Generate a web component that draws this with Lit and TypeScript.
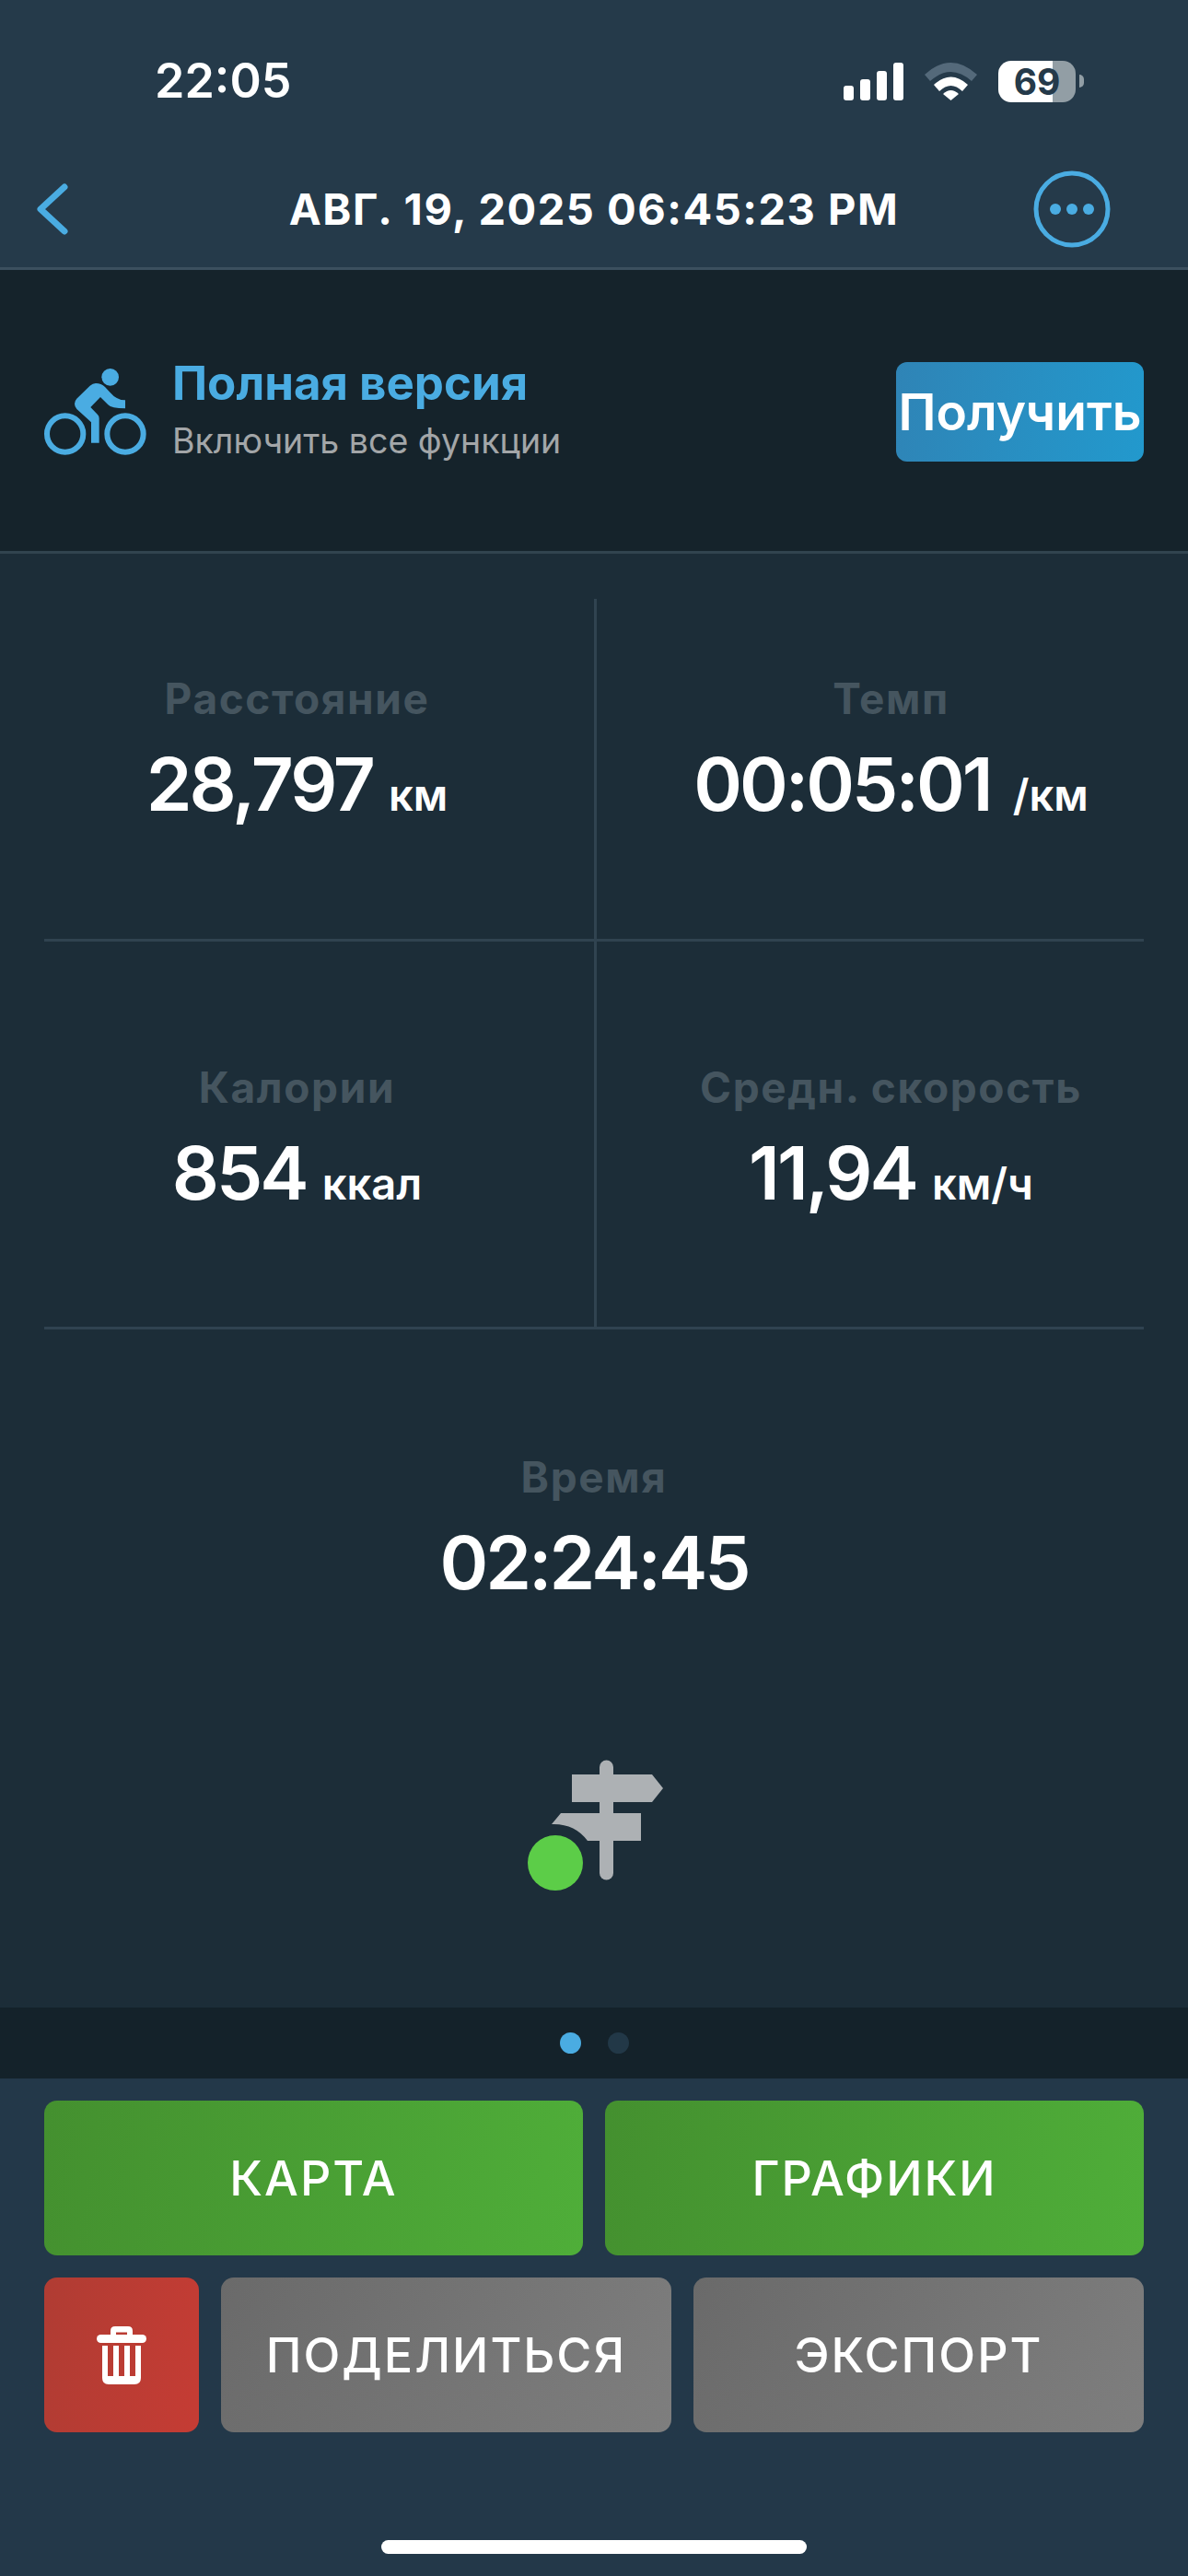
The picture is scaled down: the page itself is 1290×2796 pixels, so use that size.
import { LitElement, html, css, svg } from 'lit';
import { customElement } from 'lit/decorators.js';

@customElement('app-root')
export class AppRoot extends LitElement {
  static styles = css`
    :host {
      display: block;
      width: 1290px;
      height: 2796px;
      overflow: hidden;
      font-family: Inter, 'Liberation Sans', sans-serif;
      color: #fff;
      background: #233849;
    }
    .page {
      display: flex;
      flex-direction: column;
      height: 100%;
    }
    .top {
      height: 290px;
      background: #253a4a;
      border-bottom: 3px solid #3b4f5e;
      display: flex;
      flex-direction: column;
    }
    .status {
      height: 150px;
      display: flex;
      align-items: center;
      padding-left: 168px;
      padding-right: 113px;
      padding-top: 26px;
      box-sizing: border-box;
    }
    .clock {
      font-size: 52px;
      font-weight: 600;
      line-height: 60px;
      flex: 1;
    }
    .status-icons {
      display: flex;
      align-items: center;
      gap: 23px;
    }
    .battery {
      display: flex;
      align-items: center;
      gap: 4px;
    }
    .battery-body {
      width: 84px;
      height: 45px;
      border-radius: 14px;
      background: linear-gradient(90deg, #fff 70%, #929ea5 70%);
      color: #253a4a;
      font-size: 39px;
      font-weight: 700;
      line-height: 45px;
      text-align: center;
    }
    .battery-cap {
      width: 5px;
      height: 14px;
      border-radius: 0 5px 5px 0;
      background: #929ea5;
    }
    .nav {
      flex: 1;
      display: grid;
      grid-template-columns: 1fr auto 1fr;
      align-items: center;
      padding: 13px 84px 0;
    }
    .back {
      margin-left: -44px;
    }
    .more {
      justify-self: end;
    }
    .nav-title {
      font-size: 47px;
      font-weight: 700;
      letter-spacing: 1.5px;
      white-space: nowrap;
    }
    .banner {
      height: 308px;
      box-sizing: border-box;
      background: #15232b;
      border-bottom: 3px solid #31444f;
      display: flex;
      align-items: flex-start;
      padding: 100px 48px 0 40px;
    }
    .bike {
      margin-right: 17px;
      margin-top: -13px;
      margin-left: -10px;
    }
    .banner-text {
      flex: 1;
      display: flex;
      flex-direction: column;
      margin-top: -8px;
    }
    .banner-title {
      font-size: 51px;
      font-weight: 700;
      line-height: 62px;
      color: #4aace2;
    }
    .banner-sub {
      font-size: 37.5px;
      line-height: 50px;
      margin-top: 7px;
      color: #a3a6a8;
    }
    .get {
      width: 269px;
      height: 108px;
      border-radius: 12px;
      background: linear-gradient(100deg, #2f84b6, #2299cd);
      font-size: 55px;
      font-weight: 600;
      display: flex;
      align-items: center;
      justify-content: center;
      white-space: nowrap;
    }
    .stats {
      height: 1578px;
      box-sizing: border-box;
      background: #1c2d38;
      padding: 49px 48px 0;
      display: flex;
      flex-direction: column;
    }
    .grid {
      display: grid;
      grid-template-columns: 1fr 1fr;
      grid-template-rows: 372px 421px;
    }
    .cell {
      border-bottom: 3px solid #304350;
      display: flex;
      flex-direction: column;
      align-items: center;
    }
    /* the lines stop 48px short of the edges, the text is centred on the full half */
    .cell.left {
      padding-right: 48px;
    }
    .cell.right {
      border-left: 3px solid #304350;
      padding-left: 45px;
    }
    .cell.first {
      padding-top: 82px;
    }
    .cell.second {
      padding-top: 132px;
    }
    .cell.wide {
      border: 0;
      padding-top: 134px;
    }
    .label {
      font-size: 46px;
      font-weight: 700;
      letter-spacing: 1.6px;
      line-height: 52px;
      color: #45555f;
    }
    .value {
      font-size: 80px;
      font-weight: 600;
      letter-spacing: -3px;
      line-height: 92px;
      margin-top: 21px;
      white-space: nowrap;
    }
    .unit {
      font-size: 47px;
      font-weight: 600;
      letter-spacing: 0;
    }
    .unit.slash {
      margin-left: 7px;
    }
    .route {
      display: block;
      align-self: center;
      margin-top: 164px;
    }
    .pager {
      height: 77px;
      background: #14222a;
      display: flex;
      align-items: center;
      justify-content: center;
      gap: 29px;
    }
    .dot {
      width: 23px;
      height: 23px;
      border-radius: 50%;
      background: #223847;
    }
    .dot.on {
      background: #4aace2;
    }
    .actions {
      padding: 24px 48px 0;
      display: flex;
      flex-direction: column;
      gap: 24px;
    }
    .row {
      display: flex;
      gap: 24px;
      height: 168px;
    }
    .btn {
      flex: 1;
      border-radius: 14px;
      font-size: 52px;
      font-weight: 500;
      letter-spacing: 2px;
      display: flex;
      align-items: center;
      justify-content: center;
    }
    .green {
      background: linear-gradient(100deg, #44902f, #4fae39);
    }
    .gray {
      background: linear-gradient(120deg, #6a6a6a, #7e7e7e);
    }
    .red {
      flex: none;
      width: 168px;
      background: linear-gradient(100deg, #b03c33, #c53c34);
    }
    .home-wrap {
      flex: 1;
      display: flex;
      justify-content: center;
      padding-top: 117px;
    }
    .home {
      width: 462px;
      height: 15px;
      border-radius: 8px;
      background: #fff;
    }
  `;

  private stat(label: string, value: string, unit: string, cls: string) {
    return html`
      <div class="cell ${cls}">
        <div class="label">${label}</div>
        <div class="value">${value}${unit
          ? html` <span class="unit ${unit.startsWith('/') ? 'slash' : ''}">${unit}</span>`
          : ''}</div>
      </div>
    `;
  }

  render() {
    return html`
      <div class="page">
        <div class="top">
          <div class="status">
            <div class="clock">22:05</div>
            <div class="status-icons">
              <svg width="65" height="41" viewBox="0 0 65 41" fill="#fff">
                <rect x="0" y="25" width="11" height="16" rx="3"></rect>
                <rect x="18" y="18" width="11" height="23" rx="3"></rect>
                <rect x="36" y="9" width="11" height="32" rx="3"></rect>
                <rect x="54" y="0" width="11" height="41" rx="3"></rect>
              </svg>
              <svg width="57" height="41" viewBox="0 0 57 41">
                <path d="M0 13 Q28.500 -13 57 13 L51 20 Q28.500 0 6 20 Z" fill="#54697a"></path>
                <path d="M10 24 Q28.500 7 47 24 L41 31 Q28.500 19 16 31 Z" fill="#fff"></path>
                <path d="M20 34 Q28.500 26 37 34 L28.500 41 Z" fill="#fff"></path>
              </svg>
              <div class="battery">
                <div class="battery-body">69</div>
                <div class="battery-cap"></div>
              </div>
            </div>
          </div>
          <div class="nav">
            <svg class="back" width="34" height="56" viewBox="0 0 34 56" fill="none" stroke="#4aace2" stroke-width="7" stroke-linecap="round" stroke-linejoin="round">
              <path d="M30 4 L4 28 L30 52"></path>
            </svg>
            <div class="nav-title">АВГ. 19, 2025 06:45:23 PM</div>
            <svg class="more" width="84" height="84" viewBox="0 0 84 84">
              <circle cx="42" cy="42" r="39" fill="none" stroke="#4aace2" stroke-width="5"></circle>
              <circle cx="24" cy="42" r="6" fill="#4aace2"></circle>
              <circle cx="42" cy="42" r="6" fill="#4aace2"></circle>
              <circle cx="60" cy="42" r="6" fill="#4aace2"></circle>
            </svg>
          </div>
        </div>

        <div class="banner">
          <svg class="bike" width="140" height="130" viewBox="0 0 420 390">
            <circle cx="269" cy="88" r="28" fill="#4aace2"></circle>
            <circle cx="122" cy="273" r="59" fill="none" stroke="#4aace2" stroke-width="18"></circle>
            <circle cx="318" cy="273" r="59" fill="none" stroke="#4aace2" stroke-width="18"></circle>
            <path d="M207 302 H233 V222 Q233 215 228 210 L205 186 L237 153 L262 178 Q272 190 318 190 V163 Q290 163 268 137 L252 120 Q240 108 222 108 Q212 108 203 116 L160 158 Q153 165 153 175 Q153 185 160 192 L207 235 Z" fill="#4aace2"></path>
          </svg>
          <div class="banner-text">
            <div class="banner-title">Полная версия</div>
            <div class="banner-sub">Включить все функции</div>
          </div>
          <div class="get">Получить</div>
        </div>

        <div class="stats">
          <div class="grid">
            ${this.stat('Расстояние', '28,797', 'км', 'left first')}
            ${this.stat('Темп', '00:05:01', '/км', 'right first')}
            ${this.stat('Калории', '854', 'ккал', 'left second')}
            ${this.stat('Средн. скорость', '11,94', 'км/ч', 'right second')}
          </div>
          ${this.stat('Время', '02:24:45', '', 'wide')}
          <svg class="route" width="150" height="150" viewBox="570 1905 150 150">
            ${svg`
              <path d="M651 1917 a7.500 7.500 0 0 1 15 0 V2032 a7.500 7.500 0 0 1 -15 0 Z" fill="#adb1b4"></path>
              <path d="M621 1925 H708 L720 1940 L708 1955 H621 Z" fill="#adb1b4"></path>
              <path d="M609 1967 H696 V1997 H638 Q624 1978 599 1979 Z" fill="#adb1b4"></path>
              <circle cx="603" cy="2021" r="30" fill="#5ccd48"></circle>
            `}
          </svg>
        </div>

        <div class="pager">
          <div class="dot on"></div>
          <div class="dot"></div>
        </div>

        <div class="actions">
          <div class="row">
            <div class="btn green">КАРТА</div>
            <div class="btn green">ГРАФИКИ</div>
          </div>
          <div class="row">
            <div class="btn red">
              <svg width="54" height="63" viewBox="0 0 54 63" fill="#fff">
                <path fill-rule="evenodd" d="M15 9 V5 Q15 0 20 0 H34 Q39 0 39 5 V9 Z M21 6.500 V9 H33 V6.500 Z"></path>
                <rect x="0" y="9" width="54" height="9" rx="4.500"></rect>
                <path d="M6 21 H12 V54 H18 V21 H24 V54 H30 V21 H36 V54 H42 V21 H48 V56 Q48 63 41 63 H13 Q6 63 6 56 Z"></path>
              </svg>
            </div>
            <div class="btn gray">ПОДЕЛИТЬСЯ</div>
            <div class="btn gray">ЭКСПОРТ</div>
          </div>
        </div>

        <div class="home-wrap"><div class="home"></div></div>
      </div>
    `;
  }
}
